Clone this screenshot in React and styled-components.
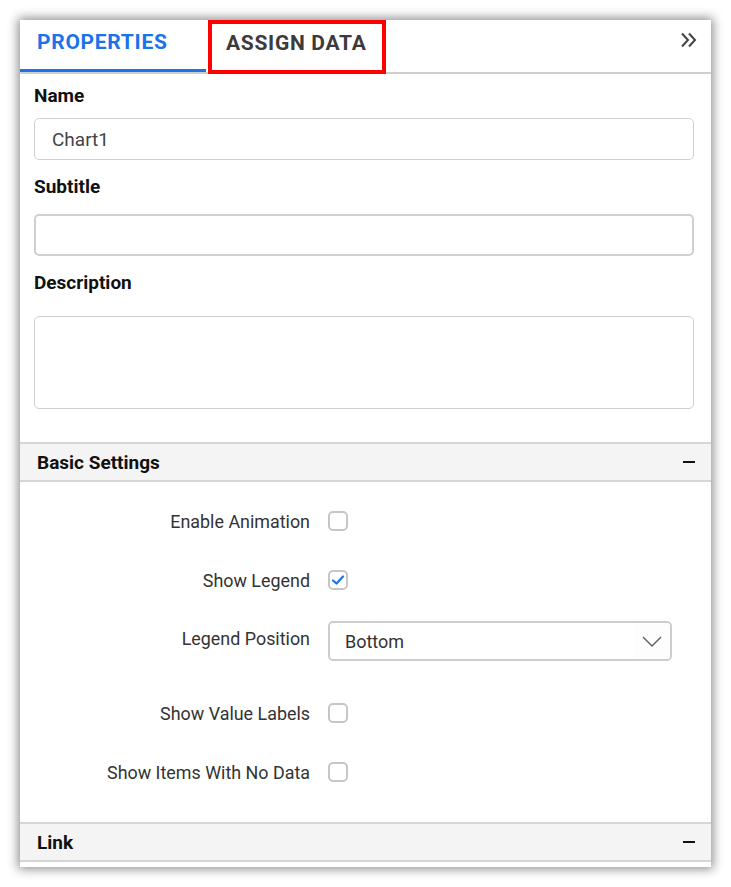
import React from "react";
import styled, { createGlobalStyle } from "styled-components";

const GlobalStyle = createGlobalStyle`
  body {
    margin: 0;
    background: #ffffff;
    font-family: Roboto, "Liberation Sans", sans-serif;
  }
`;

const Page = styled.div`
  padding: 20px 20px 20px 20px;
`;

const Panel = styled.div`
  width: 691px;
  background: #fff;
  box-shadow: 0 0 10px 2px rgba(0, 0, 0, 0.45);
  padding-bottom: 5px;
`;

const TabBar = styled.div`
  display: flex;
  height: 52px;
  border-bottom: 2px solid #cfcfcf;
  align-items: flex-start;
`;

const Tab = styled.div`
  box-sizing: border-box;
  height: ${(p) => (p.$highlight ? "54px" : "52px")};
  width: ${(p) => p.$width}px;
  display: flex;
  align-items: center;
  padding-left: ${(p) => (p.$highlight ? "14px" : "17px")};
  padding-bottom: ${(p) => (p.$highlight ? "9px" : "6px")};
  font-size: 21px;
  font-weight: 700;
  letter-spacing: 0.7px;
  color: ${(p) => (p.$active ? "#1a73e8" : "#3b3b3b")};
  border: ${(p) => (p.$highlight ? "4px solid #ff0000" : "none")};
  border-bottom: ${(p) =>
    p.$active ? "3px solid #1a73e8" : p.$highlight ? "4px solid #ff0000" : "none"};
  margin-left: ${(p) => (p.$highlight ? "2px" : "0")};
  z-index: 1;
`;

const CollapseIcon = styled.div`
  margin-left: auto;
  margin-right: 13px;
  margin-top: 12px;
  display: flex;
`;

const Form = styled.div`
  padding: 12px 17px 33px 14px;
`;

const Label = styled.div`
  font-size: 19px;
  font-weight: 700;
  color: #111;
  line-height: 20px;
  margin-top: ${(p) => p.$top || 0}px;
  margin-bottom: ${(p) => p.$bottom || 12}px;
`;

const TextInput = styled.div`
  box-sizing: border-box;
  height: ${(p) => p.$height || 42}px;
  border: ${(p) => (p.$thick ? "2px solid #d0d0d0" : "1px solid #d0d0d0")};
  border-radius: 5px;
  padding: 0 17px;
  display: flex;
  align-items: ${(p) => (p.$multi ? "flex-start" : "center")};
  font-size: 19px;
  color: #444;
`;

const SectionHeader = styled.div`
  box-sizing: border-box;
  height: 40px;
  background: #f4f4f4;
  border-top: 2px solid #d6d6d6;
  border-bottom: 2px solid #d6d6d6;
  display: flex;
  align-items: center;
  justify-content: space-between;
  padding: 0 16px 0 17px;
  font-size: 19px;
  font-weight: 700;
  color: #111;
`;

const Minus = styled.span`
  width: 12px;
  height: 2px;
  background: #111;
`;

const Settings = styled.div`
  padding: 19px 0 30px 0;
`;

const Row = styled.div`
  display: flex;
  align-items: center;
  height: 40px;
  margin-top: ${(p) => p.$top || 0}px;
`;

const RowLabel = styled.div`
  width: 290px;
  text-align: right;
  font-size: 17.9px;
  color: #333;
  margin-top: ${(p) => p.$shift || 0}px;
`;

const Box = styled.div`
  box-sizing: border-box;
  width: 20px;
  height: 20px;
  margin-left: 18px;
  border: 2px solid #c6c6c6;
  border-radius: 5px;
  display: flex;
  align-items: center;
  justify-content: center;
`;

const Select = styled.div`
  box-sizing: border-box;
  margin-left: 18px;
  width: 344px;
  height: 40px;
  border: 2px solid #cdcdcd;
  border-radius: 5px;
  display: flex;
  align-items: center;
  padding-left: 15px;
  font-size: 18px;
  color: #333;
  overflow: hidden;
`;

const Chevron = styled.div`
  margin-left: auto;
  width: 36px;
  align-self: stretch;
  background: #fdfdfd;
  display: flex;
  align-items: center;
  justify-content: center;
`;

function Checkbox({ checked }) {
  return (
    <Box>
      {checked && (
        <svg width="14" height="12" viewBox="0 0 14 12">
          <path d="M2 6.5 L5.5 9.5 L12 2.5" fill="none" stroke="#1a73e8" strokeWidth="2.2" strokeLinecap="round" strokeLinejoin="round" />
        </svg>
      )}
    </Box>
  );
}

const rows = [
  { label: "Enable Animation", top: 0 },
  { label: "Show Legend", top: 19, checked: true },
];

const rows2 = [
  { label: "Show Value Labels", top: 32 },
  { label: "Show Items With No Data", top: 19 },
];

function App() {
  return (
    <Page>
      <GlobalStyle />
      <Panel>
        <TabBar>
          <Tab $active $width={186}>PROPERTIES</Tab>
          <Tab $highlight $width={178}>ASSIGN DATA</Tab>
          <CollapseIcon>
            <svg width="18" height="16" viewBox="0 0 18 16">
              <path d="M2 1.5 L8 8 L2 14.5 M9 1.5 L15 8 L9 14.5" fill="none" stroke="#444" strokeWidth="2" />
            </svg>
          </CollapseIcon>
        </TabBar>
        <Form>
          <Label>Name</Label>
          <TextInput>Chart1</TextInput>
          <Label $top={17} $bottom={17}>Subtitle</Label>
          <TextInput $thick />
          <Label $top={17} $bottom={23}>Description</Label>
          <TextInput $multi $height={93} />
        </Form>
        <SectionHeader>
          Basic Settings
          <Minus />
        </SectionHeader>
        <Settings>
          {rows.map((r) => (
            <Row key={r.label} $top={r.top}>
              <RowLabel>{r.label}</RowLabel>
              <Checkbox checked={r.checked} />
            </Row>
          ))}
          <Row $top={21}>
            <RowLabel $shift={-5}>Legend Position</RowLabel>
            <Select>
              Bottom
              <Chevron>
                <svg width="20" height="11" viewBox="0 0 20 11">
                  <path d="M1 1 L10 10 L19 1" fill="none" stroke="#666" strokeWidth="1.5" />
                </svg>
              </Chevron>
            </Select>
          </Row>
          {rows2.map((r) => (
            <Row key={r.label} $top={r.top}>
              <RowLabel>{r.label}</RowLabel>
              <Checkbox />
            </Row>
          ))}
        </Settings>
        <SectionHeader>
          Link
          <Minus />
        </SectionHeader>
      </Panel>
    </Page>
  );
}

export default App;
